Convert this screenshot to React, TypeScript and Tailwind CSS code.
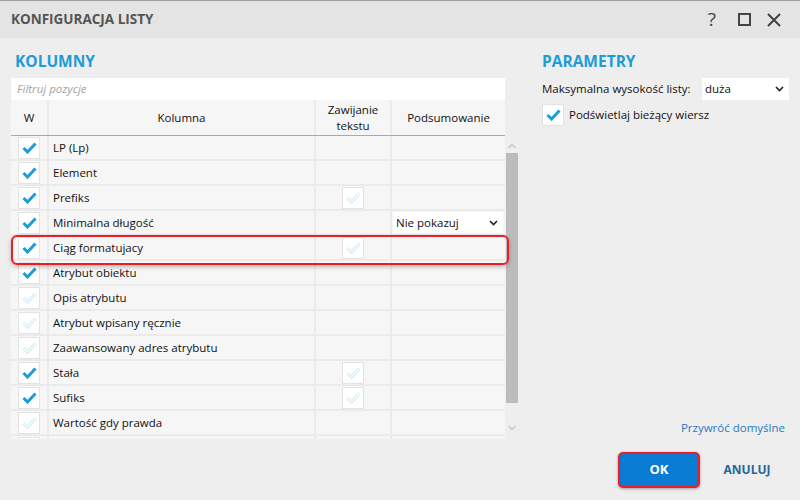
import { ChevronDown, ChevronUp } from 'lucide-react'

type Row = { name: string; on: boolean; wrap?: boolean; select?: string }

const rows: Row[] = [
  { name: 'LP (Lp)', on: true },
  { name: 'Element', on: true },
  { name: 'Prefiks', on: true, wrap: true },
  { name: 'Minimalna długość', on: true, select: 'Nie pokazuj' },
  { name: 'Ciąg formatujacy', on: true, wrap: true },
  { name: 'Atrybut obiektu', on: true },
  { name: 'Opis atrybutu', on: false },
  { name: 'Atrybut wpisany ręcznie', on: false },
  { name: 'Zaawansowany adres atrybutu', on: false },
  { name: 'Stała', on: true, wrap: true },
  { name: 'Sufiks', on: true, wrap: true },
  { name: 'Wartość gdy prawda', on: false },
  { name: '', on: false },
]

function Tick({ on }: { on: boolean }) {
  return (
    <span className="flex h-[22px] w-[22px] items-center justify-center border border-[#e3e3e3] bg-white">
      <svg width="15" height="12" viewBox="0 0 15 12" fill="none">
        {on ? (
          <path d="M1.5 6 L5.5 10 L13.5 1.5" stroke="#1a9ddb" strokeWidth="3" />
        ) : (
          <>
            <path d="M1.5 6 L5.5 10 L13.5 1.5" stroke="#c6e8f6" strokeWidth="3" />
            <path d="M1.5 6 L5.5 10 L13.5 1.5" stroke="#ffffff" strokeWidth="1.2" />
          </>
        )}
      </svg>
    </span>
  )
}

function Chevron() {
  return (
    <svg width="9" height="6" viewBox="0 0 9 6" fill="none">
      <path d="M1 1 L4.5 4.5 L8 1" stroke="#222" strokeWidth="1.6" />
    </svg>
  )
}

export default function App() {
  return (
    <div
      className="relative flex h-[500px] w-[800px] flex-col overflow-hidden border-t border-[#9d9d9d] bg-[#eeeeee] text-[11.5px] text-[#111]"
      style={{ fontFamily: '"Open Sans", "Noto Sans", sans-serif' }}
    >
      {/* title bar */}
      <div className="flex h-[37px] shrink-0 items-center justify-between bg-[#e4e4e4] pl-[11px] pr-[19px]">
        <span className="text-[13.5px] font-bold text-[#555]">KONFIGURACJA LISTY</span>
        <div className="flex items-center text-[#444]">
          <span className="mr-[22px] text-[19px] leading-none">?</span>
          <span className="mr-[16px] block h-[13px] w-[13px] border-2 border-[#444]" />
          <svg width="14" height="14" viewBox="0 0 14 14">
            <path d="M1 1 L13 13 M13 1 L1 13" stroke="#444" strokeWidth="2" />
          </svg>
        </div>
      </div>

      {/* body */}
      <div className="flex h-[402px] shrink-0">
        <div className="ml-[11px] flex w-[507px] flex-col pt-[13px]">
          <h2 className="mb-[7px] pl-[4px] text-[15.5px] font-bold leading-[20px] text-[#1e9cd7]">KOLUMNY</h2>
          <div className="flex h-[22px] w-[494px] items-center bg-white pl-[6px] italic text-[#a3a3a3]">
            Filtruj pozycje
          </div>

          {/* header */}
          <div className="grid h-[36px] w-[494px] grid-cols-[36px_265px_74px_113px] gap-x-[2px] border-b border-[#a9a9a9] bg-[#ebebeb] text-center leading-[16px]">
            <div className="flex items-center justify-center bg-[#f6f6f6]">W</div>
            <div className="flex items-center justify-center bg-[#f6f6f6]">Kolumna</div>
            <div className="flex items-center justify-center bg-[#f6f6f6]">
              Zawijanie
              <br />
              tekstu
            </div>
            <div className="flex items-center justify-center bg-[#f6f6f6]">Podsumowanie</div>
          </div>

          {/* rows + scrollbar */}
          <div className="flex h-[303px]">
            <div className="w-[494px] overflow-hidden">
              {rows.map((r, i) => (
                <div
                  key={i}
                  className="grid h-[25px] grid-cols-[36px_265px_74px_113px] gap-x-[2px] border-b-2 border-[#ebebeb] bg-[#ebebeb]"
                >
                  <div className="flex items-center justify-center bg-[#f6f6f6]">
                    <Tick on={r.on} />
                  </div>
                  <div className="flex items-center bg-[#f6f6f6] pl-[4px] pt-[1px]">{r.name}</div>
                  <div className="flex items-center justify-center bg-[#f6f6f6]">
                    {r.wrap && <Tick on={false} />}
                  </div>
                  <div className="flex items-center bg-[#f6f6f6] pl-[1px]">
                    {r.select && (
                      <div className="flex h-[21px] w-[110px] items-center justify-between bg-white pl-[3px] pr-[5px]">
                        {r.select}
                        <Chevron />
                      </div>
                    )}
                  </div>
                </div>
              ))}
            </div>
            <div className="flex w-[13px] flex-col items-center">
              <ChevronUp className="mt-[4px] h-[12px] w-[12px] text-[#c4c4c4]" strokeWidth={2.5} />
              <div className="mt-[1px] h-[250px] w-[12px] bg-[#bcbcbc]" />
              <ChevronDown className="mt-[19px] h-[12px] w-[12px] text-[#c4c4c4]" strokeWidth={2.5} />
            </div>
          </div>
        </div>

        <div className="ml-[24px] flex w-[247px] flex-col pt-[13px] pb-[4px]">
          <h2 className="mb-[7px] text-[15.5px] font-bold leading-[20px] text-[#1e9cd7]">PARAMETRY</h2>
          <div className="flex h-[22px] items-center justify-between">
            <span>Maksymalna wysokość listy:</span>
            <div className="flex h-[22px] w-[87px] items-center justify-between bg-white pl-[3px] pr-[5px]">
              duża
              <Chevron />
            </div>
          </div>
          <div className="mt-[4px] flex items-center gap-[5px]">
            <Tick on={true} />
            <span>Podświetlaj bieżący wiersz</span>
          </div>
          <div className="mt-auto flex justify-end pr-[4px] text-[#2a78c2]">Przywróć domyślne</div>
        </div>
      </div>

      {/* footer */}
      <div className="flex flex-1 items-start justify-end gap-[6px] pt-[12px] pr-[12px]">
        <button className="flex h-[36px] w-[82px] items-center justify-center rounded-[5px] border-2 border-[#ee1c24] bg-[#0a7bd2] text-[13px] font-bold text-white shadow-[0_1px_3px_rgba(0,0,0,0.35)]">
          OK
        </button>
        <button className="flex h-[36px] w-[82px] items-center justify-center text-[12px] font-bold text-[#22679e]">
          ANULUJ
        </button>
      </div>

      {/* highlighted row annotation */}
      <div className="pointer-events-none absolute left-[11px] top-[234px] h-[30px] w-[498px] rounded-[6px] border-2 border-[#ee1c24] shadow-[0_2px_4px_rgba(0,0,0,0.25)]" />
    </div>
  )
}
